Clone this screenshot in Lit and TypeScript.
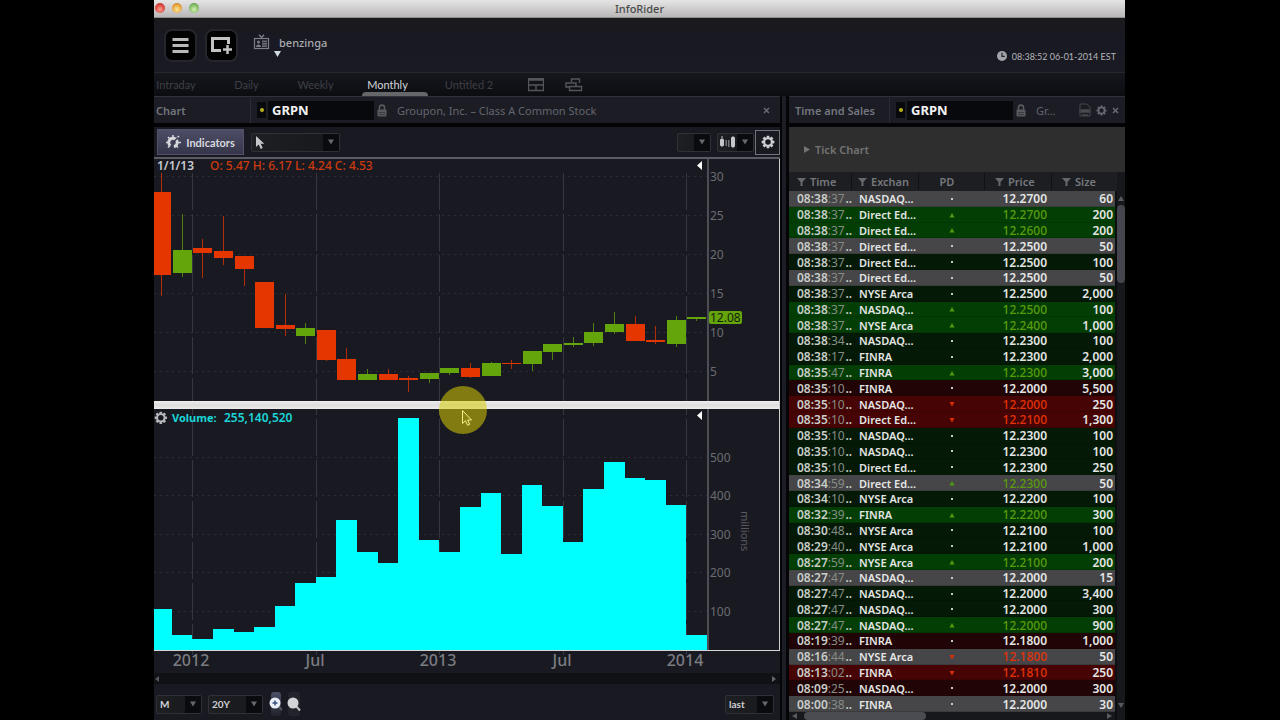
import { LitElement, html, svg, css } from "lit";
import { customElement, property } from "lit/decorators.js";
import { classMap } from "lit/directives/class-map.js";

type Candle = [up: boolean, high: number, top: number, bottom: number, low: number];

// Vertical extents of each monthly candle in chart units.
const CANDLES: Candle[] = [
  [false, 173, 192, 275, 296],
  [true, 214, 250, 273, 277],
  [false, 239, 248, 253, 278],
  [false, 216, 251, 258, 265],
  [false, 256, 256, 269, 286],
  [false, 282, 282, 328, 328],
  [false, 294, 325, 329, 336],
  [true, 323, 328, 336, 344],
  [false, 330, 330, 360, 361],
  [false, 348, 359, 380, 380],
  [true, 369, 374, 380, 380],
  [false, 369, 374, 380, 380],
  [false, 376, 378, 380, 392],
  [true, 373, 373, 379, 383],
  [true, 368, 368, 373, 375],
  [false, 363, 368, 377, 378],
  [true, 362, 363, 376, 376],
  [false, 360, 363, 364, 369],
  [true, 351, 351, 364, 371],
  [true, 344, 344, 352, 360],
  [true, 337, 343, 345, 347],
  [true, 323, 332, 343, 346],
  [true, 312, 324, 332, 334],
  [false, 316, 324, 341, 341],
  [false, 326, 340, 342, 344],
  [true, 316, 320, 344, 347],
  [true, 317, 317, 319, 321],
];

const VOLUME_TOPS = [
  609, 635, 639, 629, 632, 627, 606, 583, 577, 520, 552, 563, 418, 540, 552, 507, 493, 554, 485,
  506, 542, 489, 462, 478, 480, 505, 635,
];

const FIRST_YEAR_X = 192.4;
const MONTH = 20.58;
const monthX = (i: number) => Math.round(FIRST_YEAR_X + (i - 2) * MONTH);

const PRICE_TICKS: [number, string][] = [
  [177, "30"], [216, "25"], [255, "20"], [294, "15"], [333, "10"], [372, "5"],
];
const VOLUME_TICKS: [number, string][] = [
  [458, "500"], [496, "400"], [535, "300"], [573, "200"], [612, "100"],
];
const TIME_TICKS: [number, string][] = [
  [2, "2012"], [8, "Jul"], [14, "2013"], [20, "Jul"], [26, "2014"],
];

const gearPath = (() => {
  let d = "";
  for (let i = 0; i < 8; i++) {
    const a = (i * Math.PI) / 4;
    const pt = (r: number, off: number) =>
      `${(8 + r * Math.cos(a + off)).toFixed(2)} ${(8 + r * Math.sin(a + off)).toFixed(2)}`;
    d += `${i ? "L" : "M"}${pt(5.5, -0.3)}L${pt(7.4, -0.2)}L${pt(7.4, 0.2)}L${pt(5.5, 0.3)}`;
  }
  return `${d}ZM8 4.8a3.2 3.2 0 1 0 0 6.4a3.2 3.2 0 0 0 0-6.4Z`;
})();

const gear = (size: number) => html`<svg width=${size} height=${size} viewBox="0 0 16 16">
  <path fill="currentColor" fill-rule="evenodd" d=${gearPath}></path>
</svg>`;

const lock = html`<svg width="10" height="13" viewBox="0 0 10 13">
  <path d="M2.500 6V3.600a2.500 2.500 0 0 1 5 0V6" fill="none" stroke="#585a60" stroke-width="1.600" />
  <rect x="0.500" y="5.500" width="9" height="7" rx="1" fill="#585a60" />
  <path d="M2 8.500h6M2 10.500h6" stroke="#33353b" stroke-width="0.800" />
</svg>`;

const close = html`<svg width="7" height="7" viewBox="0 0 7 7">
  <path d="M1 1l5 5M6 1l-5 5" stroke="currentColor" stroke-width="1.500" />
</svg>`;

@customElement("price-chart")
class PriceChart extends LitElement {
  static styles = css`
    :host { display: block; }
    .plot { display: block; width: 100%; height: auto; overflow: visible; font-family: "Noto Sans", sans-serif; font-size: 12px; }
    .axis { fill: #6b6c71; }
    .time { fill: #7b7c81; font-size: 16px; font-weight: 500; text-anchor: middle; }
    .vline { stroke: #36373e; stroke-dasharray: 37 4; }
    .hline { stroke: #2b2c33; stroke-dasharray: 2 4; }
    .up { fill: #64a50c; }
    .down { fill: #e63600; }
    .vol { fill: #00ffff; }
    .date { fill: #c9cad0; font-weight: 600; }
    .ohlc { fill: #cc3a0e; font-weight: 500; }
    .legend { fill: #19d6d8; font-size: 11px; font-weight: 700; }
    .figure { fill: #19d6d8; font-weight: 600; }
    .unit { fill: #5a5b60; font-size: 11px; }
    .flag { fill: #14200a; }
  `;

  render() {
    return html`<svg class="plot" viewBox="154 159 626 514" role="img" aria-label="GRPN monthly price and volume">
      <defs>
        <linearGradient id="bar" x1="0" y1="0" x2="0" y2="1">
          <stop offset="0" stop-color="#eeeeee" /><stop offset="0.5" stop-color="#dddddd" /><stop offset="1" stop-color="#ececec" />
        </linearGradient>
      </defs>
      <rect x="154" y="159" width="626" height="514" fill="#191a21" />
      ${[...PRICE_TICKS, ...VOLUME_TICKS].map(
        ([y]) => svg`<line class="hline" x1="154" x2="708" y1=${y - 0.5} y2=${y - 0.5} />`
      )}
      ${TIME_TICKS.map(([i]) => svg`<line class="vline" x1=${monthX(i) + 0.5} x2=${monthX(i) + 0.5} y1="173" y2="655" />`)}

      ${CANDLES.map(([up, high, top, bottom, low], i) => {
        const x = i ? monthX(i) + 1 : 154;
        const w = i ? 19 : 17;
        const mid = i ? monthX(i) + 10 : 161;
        return svg`<g class=${up ? "up" : "down"}>
          <rect x=${mid} y=${high} width="1" height=${low - high} opacity="0.75" />
          <rect x=${x} y=${top} width=${w} height=${bottom - top} />
        </g>`;
      })}
      ${VOLUME_TOPS.map((y, i) => {
        const x = i ? monthX(i) : 154;
        return svg`<rect class="vol" x=${x} y=${y} width=${monthX(i + 1) - x} height=${650 - y} />`;
      })}

      <rect x="707" y="159" width="2" height="492" fill="#4d4e54" />
      <rect x="154" y="650" width="626" height="1" fill="#d5d6d8" />
      <rect x="154" y="401" width="626" height="8" fill="url(#bar)" />
      <rect x="779" y="159" width="1" height="492" fill="#d0d0d3" />
      <path d="M702 161v9l-5-4.500z M702 411v9l-5-4.500z" fill="#ffffff" />

      ${[...PRICE_TICKS, ...VOLUME_TICKS].map(([y, t]) => svg`<text class="axis" x="710" y=${y + 4}>${t}</text>`)}
      ${TIME_TICKS.map(([i, t]) => svg`<text class="time" x=${monthX(i) - 1} y="666">${t}</text>`)}
      <text class="unit" transform="translate(741 511) rotate(90)">millions</text>

      <rect x="709" y="311" width="33" height="13" rx="2" fill="#64a50c" />
      <text class="flag" x="710" y="322">12.08</text>

      <text class="date" x="157" y="170">1/1/13</text>
      <text class="ohlc" x="210" y="170">O: 5.47 H: 6.17 L: 4.24 C: 4.53</text>
      <path transform="translate(154 411) scale(0.85)" fill="#b5b6ba" fill-rule="evenodd" d=${gearPath} />
      <text class="legend" x="172" y="422">Volume:</text>
      <text class="figure" x="224" y="422">255,140,520</text>

      <circle cx="463" cy="410" r="24" fill="#d8cc06" fill-opacity="0.55" />
      <path d="M462.500 410.500v13l3-2.700 2 4.500 2.200-1-2-4.300h3.800z" fill="#8a8212" stroke="#f4ee8a" stroke-width="1" />
    </svg>`;
  }
}

@customElement("panel-header")
class PanelHeader extends LitElement {
  @property() name = "";
  @property() company = "";
  @property({ type: Boolean }) tools = false;

  static styles = css`
    :host { display: flex; align-items: center; height: 27px; box-sizing: border-box; background: #1b1c24; border-top: 1px solid #30313a; font-family: "Noto Sans", sans-serif; color: #74767e; }
    .name { width: 94px; font-size: 11px; font-weight: 600; border-right: 1px solid #2b2c35; line-height: 25px; white-space: nowrap; box-sizing: content-box; }
    .lamp { width: 9px; height: 16px; margin-left: 6px; display: grid; place-items: center; background: #08090c; }
    .dot { width: 4px; height: 4px; border-radius: 50%; background: #b9b31c; }
    .symbol { width: 106px; height: 19px; box-sizing: border-box; margin-left: 2px; padding: 0 4px; border: 0; background: #08090d; color: #f2f2f4; font: 700 13px "Noto Sans", sans-serif; }
    .lock { margin-left: 3px; display: flex; }
    .company { flex: 1; min-width: 0; margin-left: 10px; font-size: 11px; color: #64666d; white-space: nowrap; overflow: hidden; text-overflow: ellipsis; }
    .icon { display: flex; padding: 0; border: 0; background: none; color: #686a71; }
    .actions { display: flex; align-items: center; gap: 6px; padding-right: 10px; }
    .tight { gap: 5px; padding-right: 6px; padding-left: 16px; }
  `;

  render() {
    return html`
      <span class="name">${this.name}</span>
      <span class="lamp"><span class="dot"></span></span>
      <input class="symbol" aria-label="${this.name} symbol" .value=${"GRPN"} />
      <span class="lock">${lock}</span>
      <span class="company">${this.company}</span>
      <span class=${classMap({ actions: true, tight: this.tools })}>
        ${this.tools
          ? html`<button class="icon" aria-label="Export">
                <svg width="12" height="14" viewBox="0 0 12 14">
                  <path d="M1 1h7l3 3v9H1z" fill="none" stroke="#44464c" />
                  <path d="M0 6h12v4H0z" fill="#3a3c42" /><path d="M2 8h8M3 12h6" stroke="#585a60" />
                </svg>
              </button>
              <button class="icon" aria-label="Settings">${gear(11)}</button>`
          : ""}
        <button class="icon" aria-label="Close">${close}</button>
      </span>
    `;
  }
}

@customElement("drop-down")
class DropDown extends LitElement {
  @property() value = "";
  @property() label = "";

  static styles = css`
    :host { display: grid; height: 17px; border: 1px solid #303138; border-radius: 2px; background: linear-gradient(90deg, #1e1f22, #17181d); }
    .pick { grid-area: 1 / 1; width: 100%; height: 17px; padding: 0 20px 0 3px; border: 0; background: none; appearance: none; color: #cfd0d4; font: 700 10px Lato, "Noto Sans", sans-serif; }
    .cap { grid-area: 1 / 1; justify-self: end; width: 16px; height: 17px; display: grid; place-items: center; background: #0a0b0e; pointer-events: none; }
    .face { grid-area: 1 / 1; align-self: center; pointer-events: none; display: flex; padding-left: 2px; }
  `;

  render() {
    return html`
      <select class="pick" aria-label=${this.label}><option>${this.value}</option></select>
      <span class="face"><slot></slot></span>
      <span class="cap"><svg width="6" height="6" viewBox="0 0 7 6"><path d="M0 0h7L3.500 6z" fill="#66686d" /></svg></span>
    `;
  }
}

type Trade = [time: string, sec: string, exch: string, dir: "" | "u" | "d", price: string, size: string, tone: string];

const TRADES: Trade[] = [
  ["08:38", "37", "NASDAQ...", "", "12.2700", "60", "grey"],
  ["08:38", "37", "Direct Ed...", "u", "12.2700", "200", "green"],
  ["08:38", "37", "Direct Ed...", "u", "12.2600", "200", "green"],
  ["08:38", "37", "Direct Ed...", "", "12.2500", "50", "grey"],
  ["08:38", "37", "Direct Ed...", "", "12.2500", "100", "pine"],
  ["08:38", "37", "Direct Ed...", "", "12.2500", "50", "grey"],
  ["08:38", "37", "NYSE Arca", "", "12.2500", "2,000", "pine"],
  ["08:38", "37", "NASDAQ...", "u", "12.2500", "100", "green"],
  ["08:38", "37", "NYSE Arca", "u", "12.2400", "1,000", "green"],
  ["08:38", "34", "NASDAQ...", "", "12.2300", "100", "pine"],
  ["08:38", "17", "FINRA", "", "12.2300", "2,000", "pine"],
  ["08:35", "47", "FINRA", "u", "12.2300", "3,000", "green"],
  ["08:35", "10", "FINRA", "", "12.2000", "5,500", "wine"],
  ["08:35", "10", "NASDAQ...", "d", "12.2000", "250", "red"],
  ["08:35", "10", "Direct Ed...", "d", "12.2100", "1,300", "red"],
  ["08:35", "10", "NASDAQ...", "", "12.2300", "100", "pine"],
  ["08:35", "10", "NASDAQ...", "", "12.2300", "100", "pine"],
  ["08:35", "10", "Direct Ed...", "", "12.2300", "250", "pine"],
  ["08:34", "59", "Direct Ed...", "u", "12.2300", "50", "grey"],
  ["08:34", "10", "NYSE Arca", "", "12.2200", "100", "pine"],
  ["08:32", "39", "FINRA", "u", "12.2200", "300", "green"],
  ["08:30", "48", "NYSE Arca", "", "12.2100", "100", "pine"],
  ["08:29", "40", "NYSE Arca", "", "12.2100", "1,000", "pine"],
  ["08:27", "59", "NYSE Arca", "u", "12.2100", "200", "green"],
  ["08:27", "47", "NASDAQ...", "", "12.2000", "15", "grey"],
  ["08:27", "47", "NASDAQ...", "", "12.2000", "3,400", "pine"],
  ["08:27", "47", "NASDAQ...", "", "12.2000", "300", "pine"],
  ["08:27", "47", "NASDAQ...", "u", "12.2000", "900", "green"],
  ["08:19", "39", "FINRA", "", "12.1800", "1,000", "wine"],
  ["08:16", "44", "NYSE Arca", "d", "12.1800", "50", "grey"],
  ["08:13", "02", "FINRA", "d", "12.1810", "250", "red"],
  ["08:09", "25", "NASDAQ...", "", "12.2000", "300", "wine"],
  ["08:00", "38", "FINRA", "", "12.2000", "30", "grey"],
];

@customElement("time-sales")
class TimeSales extends LitElement {
  static styles = css`
    :host { flex: 1; min-height: 0; display: flex; font-family: "Noto Sans", sans-serif; background: #0d0e11; }
    .main { flex: 1; min-width: 0; display: flex; flex-direction: column; }
    .table { flex: 1; min-height: 0; display: flex; flex-direction: column; }
    .head { background: #1d1e22; }
    .row { display: grid; grid-template-columns: 63fr 67fr 66fr 67fr 63fr; align-items: center; min-height: 0; }
    .head .row { height: 19px; margin-right: -10px; padding-right: 10px; background: #1d1e22; }
    .th { display: flex; align-items: center; gap: 4px; height: 17px; box-sizing: border-box; padding: 0 0 0 8px; border-right: 1px solid #101114; color: #77787c; font-size: 11px; font-weight: 600; text-align: left; }
    .th.ex { padding-left: 6px; }
    .th.pd { justify-content: center; padding: 0 9px 0 0; }
    .th.wide { padding-left: 10px; }
    .th.last { border-right: 0; }
    .body { flex: 1; min-height: 0; display: grid; grid-template-rows: repeat(33, minmax(0, 1fr)); }
    .td { padding: 0; color: #e4e5e4; font-size: 12px; line-height: 15px; font-weight: 600; white-space: nowrap; }
    .time { display: flex; padding-left: 8px; color: #c9cdc9; }
    .sec { color: #868c86; font-weight: 400; flex: 1; }
    .td.ex { padding-left: 7px; font-size: 11px; }
    .mid { display: grid; place-items: center; }
    .num { text-align: right; padding-right: 5px; }
    .size { text-align: right; padding-right: 2px; }
    .grey { background: #464548; }
    .green { background: #033f05; }
    .pine { background: #041a06; }
    .red { background: #470405; }
    .wine { background: #210506; }
    .grey, .green, .pine, .red, .wine { box-shadow: inset 0 -1px 0 rgb(0 0 0 / 0.15); }
    .u { color: #5a9c0c; font-weight: 500; }
    .d { color: #e23308; font-weight: 500; }
    .vbar { width: 8px; margin-left: 2px; padding-top: 24px; display: flex; flex-direction: column; align-items: center; background: #17181c; }
    .vthumb { width: 8px; height: 78px; margin-top: 4px; border-radius: 4px; background: #45464d; }
    .down { margin-top: auto; padding-bottom: 12px; }
    .hbar { height: 8px; display: flex; align-items: center; padding: 0 3px; background: #17181c; }
    .hthumb { width: 38%; height: 8px; margin-left: 7px; margin-right: auto; border-radius: 4px; background: #4b4c52; }
  `;

  private funnel = html`<svg width="9" height="8" viewBox="0 0 9 8"><path d="M0 0h9L5.500 4v4h-2V4z" fill="#66686c" /></svg>`;

  private mark(dir: string) {
    if (dir === "u") return svg`<path d="M3 1l2.500 4.500h-5z" fill="#4f9a0e" />`;
    if (dir === "d") return svg`<path d="M3 5.500l2.500-4.500h-5z" fill="#d93008" />`;
    return svg`<rect x="2" y="2" width="2" height="2" fill="#c8cac8" />`;
  }

  render() {
    return html`
      <div class="main">
        <table class="table">
          <thead class="head">
            <tr class="row">
              <th class="th">${this.funnel}Time</th>
              <th class="th ex">${this.funnel}Exchan</th>
              <th class="th pd">PD</th>
              <th class="th wide">${this.funnel}Price</th>
              <th class="th wide last">${this.funnel}Size</th>
            </tr>
          </thead>
          <tbody class="body">
            ${TRADES.map(
              ([time, sec, exch, dir, price, size, tone]) => html`<tr class="row ${tone}">
                <td class="td time">${time}<span class="sec">:${sec}</span>..</td>
                <td class="td ex">${exch}</td>
                <td class="td mid"><svg width="6" height="6" viewBox="0 0 6 6">${this.mark(dir)}</svg></td>
                <td class="td num ${dir}">${price}</td>
                <td class="td size">${size}</td>
              </tr>`
            )}
          </tbody>
        </table>
        <div class="hbar">
          <svg width="5" height="6" viewBox="0 0 5 6"><path d="M5 0v6L0 3z" fill="#595a5e" /></svg>
          <span class="hthumb"></span>
          <svg width="5" height="6" viewBox="0 0 5 6"><path d="M0 0v6l5-3z" fill="#595a5e" /></svg>
        </div>
      </div>
      <div class="vbar">
        <svg width="6" height="5" viewBox="0 0 6 5"><path d="M3 0l3 5H0z" fill="#595a5e" /></svg>
        <span class="vthumb"></span>
        <svg class="down" width="6" height="5" viewBox="0 0 6 5"><path d="M0 0h6L3 5z" fill="#595a5e" /></svg>
      </div>
    `;
  }
}

@customElement("app-root")
class AppRoot extends LitElement {
  static styles = css`
    :host { display: block; min-height: 100vh; padding: 0 155px 0 154px; background: #000; font-family: "Noto Sans", sans-serif; }
    .window { height: 100vh; display: flex; flex-direction: column; background: #191a21; overflow: hidden; }
    .title { position: relative; flex: none; height: 18px; display: flex; align-items: center; justify-content: center; box-sizing: border-box; padding-bottom: 1px; background: linear-gradient(#e6e5e6, #b9b7b8); border-bottom: 1px solid #8f8f90; color: #4b4b4b; font-size: 11px; font-weight: 500; }
    .lights { position: absolute; left: 1px; top: 3px; display: flex; gap: 7px; }
    .light { width: 10px; height: 10px; border-radius: 50%; }
    .r { background: radial-gradient(circle at 50% 65%, #f9a08f, #d9453c 60%, #9c3530); }
    .y { background: radial-gradient(circle at 50% 65%, #fde89a, #e5a03a 60%, #a8702c); }
    .g { background: radial-gradient(circle at 50% 65%, #d4f0b4, #7dba63 60%, #4d8446); }

    .top { flex: none; height: 54px; display: flex; align-items: center; padding: 0 9px 0 10px; background: linear-gradient(#1a1a1d, #181922 40%, #191a22); border-bottom: 1px solid #25262e; }
    .tile { width: 33px; height: 33px; margin-right: 8px; padding: 0; display: grid; place-items: center; border: 2px solid #25262b; border-radius: 8px; background: #020203; }
    .user { display: flex; gap: 9px; margin: 0 auto 0 7px; padding: 0; border: 0; background: none; color: #a9aaaf; font: 500 11px "Noto Sans", sans-serif; text-align: left; }
    .who { display: flex; flex-direction: column; line-height: 17px; }
    .caret { margin-left: -5px; }
    .clock { display: flex; align-items: center; gap: 5px; margin-top: 22px; color: #b4b5b9; font: 9px Lato, sans-serif; }

    .tabs { flex: none; height: 23px; display: flex; background: linear-gradient(#16171e, #0c0d11); }
    .tab { display: flex; flex-direction: column; align-items: center; justify-content: space-between; width: 67px; height: 23px; margin-right: 2px; padding: 5px 0 0; border: 0; background: none; color: #3e3f45; font: 11px/14px Lato, sans-serif; }
    .on { margin-left: 10px; margin-right: 3px; color: #d4d5d9; }
    .caption { margin-right: 14px; }
    .bar { width: 66px; height: 4px; border-radius: 4px 4px 0 0; background: #66676b; }
    .first { width: 44px; margin-right: 15px; }
    .untitled { width: 76px; margin-right: 21px; }
    .layout { display: flex; align-items: center; margin-right: 21px; padding: 0; border: 0; background: none; }

    .work { flex: 1; min-height: 0; display: grid; grid-template-columns: minmax(0, 626fr) 9px minmax(0, 336fr); }
    .pane { min-width: 0; min-height: 0; display: flex; flex-direction: column; }
    .seam { background: #1c1d25; border: solid #050507; border-width: 0 3px 0 2px; }
    .phead { flex: none; padding-left: 2px; }
    .right .phead { padding-left: 6px; }
    .gap { flex: none; height: 4px; background: #040406; }

    .tools { flex: none; height: 32px; display: flex; align-items: center; padding: 0 0 0 3px; box-sizing: border-box; border-bottom: 2px solid #5b5c63; background: #191a21; }
    .indicators { width: 87px; height: 26px; display: flex; align-items: center; justify-content: center; gap: 5px; margin-right: 7px; padding: 0; border: 1px solid #50516a; background: linear-gradient(#4d4e66, #35364a); color: #d8d9de; font: 700 11px Lato, "Noto Sans", sans-serif; }
    .draw { width: 87px; margin-right: auto; }
    .style { width: 32px; margin-right: 6px; }
    .kind { width: 35px; margin-right: 1px; }
    .cog { width: 25px; height: 25px; display: grid; place-items: center; padding: 0; border: 1px solid #70727c; background: #191a21; color: #cfd0d4; }
    .scroll { flex: none; height: 11px; display: flex; align-items: center; justify-content: space-between; padding: 0 4px 0 1px; background: #101115; }
    .foot { flex: 1; display: flex; align-items: center; padding: 4px 6px 0 2px; }
    .period { width: 44px; margin-right: 6px; }
    .range { width: 53px; margin-right: 8px; }
    .zoom { height: 24px; padding: 0; border: 0; display: grid; place-items: center; justify-content: center; background: #22242c; border-radius: 3px; }
    .in { width: 10px; margin-right: 7px; background: linear-gradient(#4a5068, #20222b); }
    .out { width: 12px; }
    .last { width: 47px; margin-left: auto; }

    .tick { flex: none; height: 45px; display: flex; align-items: center; gap: 5px; padding: 0 0 0 15px; border: 0; background: #2e2e2e; color: #747474; font: 600 11px "Noto Sans", sans-serif; }
  `;

  render() {
    return html`
      <div class="window">
        <header class="title">
          <span class="lights"><span class="light r"></span><span class="light y"></span><span class="light g"></span></span>
          InfoRider
        </header>
        <div class="top">
          <button class="tile" aria-label="Menu">
            <svg width="17" height="17" viewBox="0 0 17 17"><path d="M0.500 2.500h16M0.500 8.500h16M0.500 14.500h16" stroke="#b9baba" stroke-width="3" /></svg>
          </button>
          <button class="tile" aria-label="Add window">
            <svg width="23" height="20" viewBox="0 0 23 20">
              <path d="M11 15.500H2.500V3.500h16V9" fill="none" stroke="#c2c3c3" stroke-width="3" />
              <path d="M17.500 10v9M13 14.500h9" stroke="#c2c3c3" stroke-width="2.500" />
            </svg>
          </button>
          <button class="user">
            <svg width="17" height="17" viewBox="0 0 17 17">
              <rect x="1.500" y="4.500" width="14" height="10" fill="none" stroke="#7d7f85" stroke-width="1.200" />
              <path d="M6 0.800l2.500 2.700 2.500-2.700" fill="none" stroke="#7d7f85" stroke-width="1.400" />
              <circle cx="5.500" cy="8" r="1.500" fill="#7d7f85" /><path d="M3 13c0-3.500 5-3.500 5 0z" fill="#7d7f85" />
              <rect x="9" y="6.500" width="5" height="6.500" fill="#6a6c72" /><path d="M9 8.500h5M9 11h5" stroke="#2a2b32" stroke-width="0.800" />
            </svg>
            <span class="who">benzinga
              <svg class="caret" width="7" height="6" viewBox="0 0 7 6"><path d="M0 0h7L3.500 6z" fill="#d0dade" /></svg>
            </span>
          </button>
          <span class="clock">
            <svg width="10" height="10" viewBox="0 0 10 10"><circle cx="5" cy="5" r="5" fill="#a2a3a7" /><path d="M5 1.800V5.300H7.800" fill="none" stroke="#22232a" stroke-width="1.200" /></svg>
            08:38:52 06-01-2014 EST
          </span>
        </div>
        <nav class="tabs">
          <button class="tab first">Intraday</button>
          <button class="tab">Daily</button>
          <button class="tab">Weekly</button>
          <button class="tab on"><span class="caption">Monthly</span><span class="bar"></span></button>
          <button class="tab untitled">Untitled 2</button>
          <button class="layout" aria-label="Tile layout">
            <svg width="16" height="14" viewBox="0 0 16 14"><path d="M0.500 0.500h15v12h-15zM0.500 2h15M0.500 7h15M8 7v6" fill="none" stroke="#55565d" stroke-width="1.400" /></svg>
          </button>
          <button class="layout" aria-label="Cascade layout">
            <svg width="18" height="14" viewBox="0 0 18 14">
              <path d="M6.500 4V1h8v4M4 9H1V5h10v3M4.500 8.500h12v4h-12z" fill="none" stroke="#55565d" stroke-width="1.400" />
            </svg>
          </button>
        </nav>
        <main class="work">
          <section class="pane left">
            <panel-header class="phead" name="Chart" company="Groupon, Inc. – Class A Common Stock"></panel-header>
            <div class="gap"></div>
            <div class="tools">
              <button class="indicators">
                <svg width="15" height="14" viewBox="0 0 15 14">
                  <circle cx="7" cy="7.500" r="4.200" fill="none" stroke="#d5d6da" stroke-width="3" stroke-dasharray="22 5" transform="rotate(130 7 7.500)" />
                  <path d="M7 0v3M2 2l2.200 2.200M0 7.500h3M2 12.500l2-2M12 12.500l-2-2M11 7.500h4M10 4l3-3" stroke="#d5d6da" stroke-width="1.500" />
                  <path d="M7 7.500l5-5" stroke="#3a3b50" stroke-width="1.500" />
                </svg>
                Indicators
              </button>
              <drop-down class="draw" label="Drawing tool">
                <svg width="12" height="15" viewBox="0 0 12 15"><path d="M2 1v11l2.700-2.500 2 4.500 2-1-2-4.300h3.600z" fill="#c5c6ca" /></svg>
              </drop-down>
              <drop-down class="style" label="Line style"></drop-down>
              <drop-down class="kind" label="Chart type">
                <svg width="16" height="12" viewBox="0 0 16 12">
                  <rect x="0" y="3" width="4" height="7" rx="1" fill="#c5c6ca" /><rect x="1.500" y="0" width="1" height="11" fill="#c5c6ca" />
                  <rect x="5.500" y="4" width="1.500" height="6" fill="#75767b" /><rect x="8" y="4" width="1.500" height="7" fill="#75767b" />
                  <rect x="11" y="1" width="4" height="10" rx="1" fill="#c5c6ca" /><rect x="12.500" y="0" width="1" height="12" fill="#c5c6ca" />
                </svg>
              </drop-down>
              <button class="cog" aria-label="Chart settings">${gear(14)}</button>
            </div>
            <price-chart></price-chart>
            <div class="scroll">
              <svg width="4" height="6" viewBox="0 0 4 6"><path d="M4 0v6L0 3z" fill="#55565a" /></svg>
              <svg width="4" height="6" viewBox="0 0 4 6"><path d="M0 0v6l4-3z" fill="#66676b" /></svg>
            </div>
            <div class="foot">
              <drop-down class="period" label="Period" value="M"></drop-down>
              <drop-down class="range" label="Range" value="20Y"></drop-down>
              <button class="zoom in" aria-label="Zoom in">
                <svg width="14" height="16" viewBox="0 0 14 16"><path d="M9 10l4 4" stroke="#54565e" stroke-width="2" /><circle cx="6" cy="7" r="5.500" fill="#e9eef8" /><path d="M6 4.500v5M3.500 7h5" stroke="#34507e" stroke-width="1.500" /></svg>
              </button>
              <button class="zoom out" aria-label="Zoom out">
                <svg width="14" height="16" viewBox="0 0 14 16"><path d="M9 10l4 4.500" stroke="#c0c1c4" stroke-width="2" /><circle cx="6" cy="7" r="5.500" fill="#d4d5d7" /></svg>
              </button>
              <drop-down class="last" label="Price basis" value="last"></drop-down>
            </div>
          </section>
          <div class="seam"></div>
          <section class="pane right">
            <panel-header class="phead" name="Time and Sales" company="Gr…" tools></panel-header>
            <div class="gap"></div>
            <button class="tick">
              <svg width="6" height="7" viewBox="0 0 6 7"><path d="M0 0v7l6-3.500z" fill="#747474" /></svg>
              Tick Chart
            </button>
            <time-sales></time-sales>
          </section>
        </main>
      </div>
    `;
  }
}
